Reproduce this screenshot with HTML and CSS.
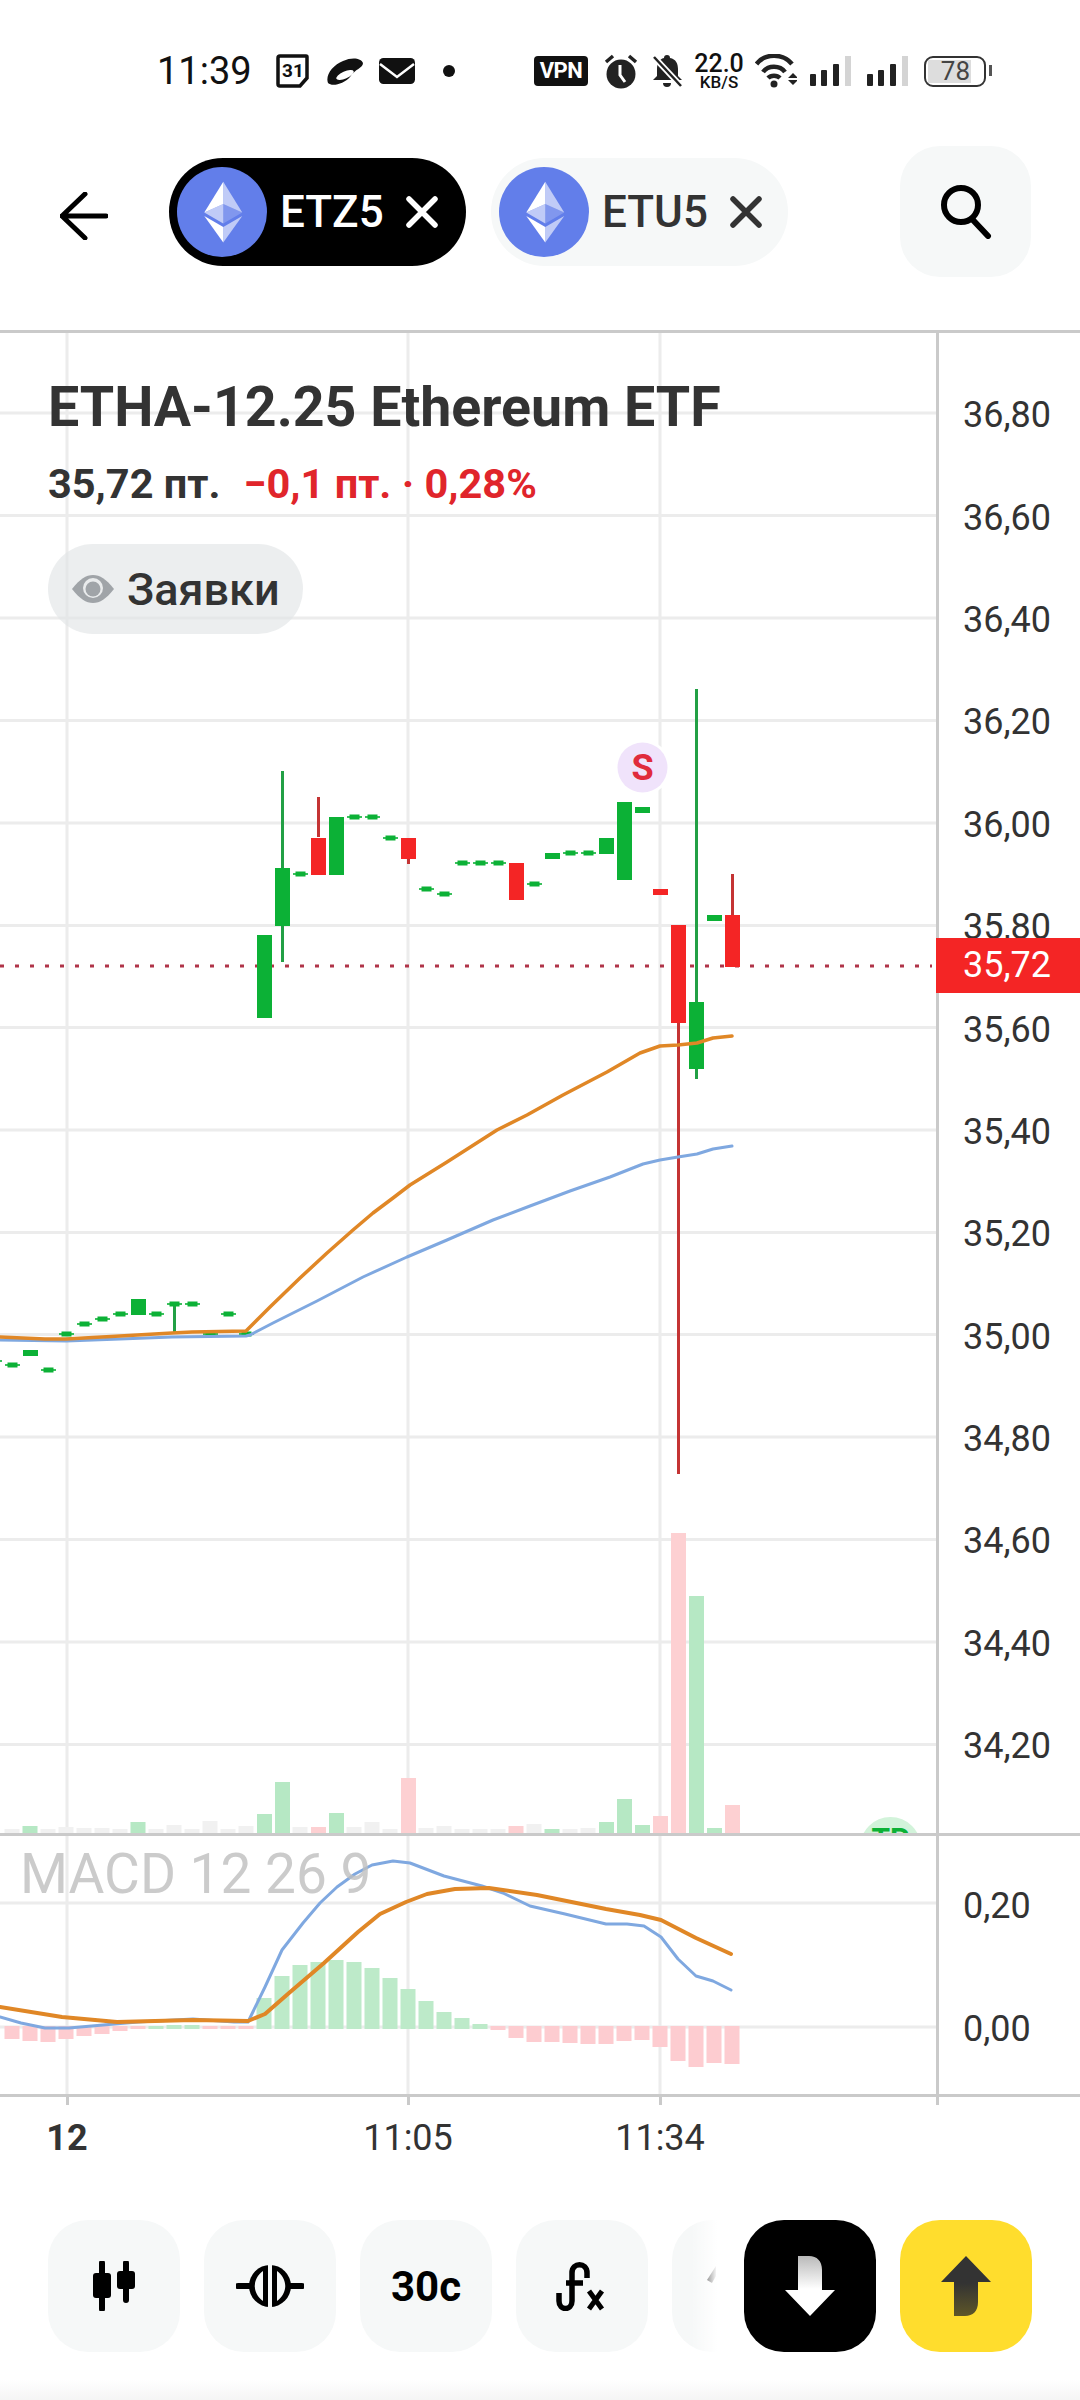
FILE: index.html
```html
<!DOCTYPE html>
<html lang="ru">
<head>
<meta charset="utf-8">
<title>ETHA-12.25 Ethereum ETF</title>
<link rel="stylesheet" href="styles.css">
</head>
<body>
<div class="screen">
  <div class="status">
    <div class="status-left">
      <span class="clock">11:39</span>
      <svg class="si" width="42" height="34" viewBox="0 0 42 34"><path class="outline" d="M13 2h26a1 1 0 0 1 1 1v21l-7 8H13a2 2 0 0 1-2-2V4a2 2 0 0 1 2-2z"/><text class="cal" x="26" y="23">31</text></svg>
      <svg class="si" width="40" height="30" viewBox="0 0 40 30"><path d="M4 27C1 19 9 9 19 5 28 1 37 2 39 7c0 5-8 6-13 14-6 7-18 10-22 6z" fill="#111"/><ellipse cx="21" cy="19" rx="9.500" ry="3.500" transform="rotate(-24 21 19)" fill="#fff"/></svg>
      <svg class="si" width="36" height="28" viewBox="0 0 36 28"><rect y="1" width="36" height="26" rx="4.500" fill="#111"/><path d="M1 7l17 13L35 7" fill="none" stroke="#fff" stroke-width="2.500"/></svg>
      <svg class="si" width="25" height="14" viewBox="0 0 25 14"><circle cx="19" cy="7" r="6" fill="#111"/></svg>
    </div>
    <div class="status-right">
      <span class="vpn">VPN</span>
      <svg class="si" width="40" height="36" viewBox="0 0 40 36"><circle cx="21" cy="21" r="14.500" fill="#222"/><path d="M6 9l7-6M36 9l-7-6" stroke="#222" stroke-width="3.500" fill="none"/><path d="M20 12v10l5 7" stroke="#fff" stroke-width="3" fill="none"/></svg>
      <svg class="si" width="31" height="34" viewBox="0 0 31 34"><path d="M15 1a3 3 0 0 1 3 3c6 1 8 6 8 11v7l4 4H1l4-4v-7c0-5 2-10 7-11a3 3 0 0 1 3-3zM11 29h8a4 4 0 0 1-8 0z" fill="#222"/><path d="M2 3l27 29" stroke="#fff" stroke-width="6"/><path d="M2 3l27 29" stroke="#222" stroke-width="2.500"/></svg>
      <div class="speed"><span class="speed-num">22.0</span><span class="speed-unit">KB/S</span></div>
      <svg class="si" width="42" height="34" viewBox="0 0 42 34"><g fill="none" stroke="#222" stroke-width="4.500"><path d="M1.500 10C10-1 28-1 37 10"/><path d="M8 18C13 11 25 11 30 18"/><path d="M13 24c3-3 9-3 12 0"/></g><circle cx="19" cy="30" r="3.500" fill="#222"/><path d="M33 24h10l-5-5zM33 26h10l-5 5z" fill="#222"/></svg>
      <svg class="si" width="45" height="32" viewBox="0 0 45 32"><rect x="1" y="19" width="6" height="12" rx="1" fill="#222"/><rect x="12" y="15" width="6" height="16" rx="1" fill="#222"/><rect x="24" y="9" width="6" height="22" rx="1" fill="#222"/><rect x="36" y="1" width="6" height="30" fill="#d4d4d4"/></svg>
      <svg class="si" width="46" height="32" viewBox="0 0 46 32"><rect x="1" y="19" width="6" height="12" rx="1" fill="#222"/><rect x="12" y="15" width="6" height="16" rx="1" fill="#222"/><rect x="24" y="9" width="6" height="22" rx="1" fill="#222"/><rect x="36" y="1" width="6" height="30" fill="#d4d4d4"/></svg>
      <div class="battery"><span class="level">78</span></div>
    </div>
  </div>

  <header class="header">
    <svg class="back" width="48" height="48" viewBox="0 0 48 48"><path d="M25 2L2 24l23 22M2 24h44" fill="none" stroke="#000" stroke-width="5" stroke-linecap="round" stroke-linejoin="round"/></svg>
    <div class="pill pill-active">
      <svg class="coin" viewBox="0 0 32 32"><circle cx="16" cy="16" r="16" fill="#627eea"/><g fill="#fff" transform="translate(1.600 1.600) scale(.9)"><path fill-opacity=".6" d="M16.500 4v8.870l7.500 3.350z"/><path d="M16.500 4L9 16.220l7.500-3.350z"/><path fill-opacity=".6" d="M16.500 21.970V28L24 17.620z"/><path d="M16.500 28v-6.030L9 17.620z"/><path fill-opacity=".2" d="M16.500 20.570l7.500-4.350-7.500-3.350z"/><path fill-opacity=".6" d="M9 16.220l7.500 4.350v-7.700z"/></g></svg>
      <span class="ticker">ETZ5</span>
      <svg class="close" width="32" height="32" viewBox="0 0 32 32"><path d="M3 3l26 26M29 3L3 29" stroke="currentColor" stroke-width="5.500" stroke-linecap="round"/></svg>
    </div>
    <div class="pill">
      <svg class="coin" viewBox="0 0 32 32"><circle cx="16" cy="16" r="16" fill="#627eea"/><g fill="#fff" transform="translate(1.600 1.600) scale(.9)"><path fill-opacity=".6" d="M16.500 4v8.870l7.500 3.350z"/><path d="M16.500 4L9 16.220l7.500-3.350z"/><path fill-opacity=".6" d="M16.500 21.970V28L24 17.620z"/><path d="M16.500 28v-6.030L9 17.620z"/><path fill-opacity=".2" d="M16.500 20.570l7.500-4.350-7.500-3.350z"/><path fill-opacity=".6" d="M9 16.220l7.500 4.350v-7.700z"/></g></svg>
      <span class="ticker">ETU5</span>
      <svg class="close" width="32" height="32" viewBox="0 0 32 32"><path d="M3 3l26 26M29 3L3 29" stroke="currentColor" stroke-width="5.500" stroke-linecap="round"/></svg>
    </div>
    <div class="search">
      <svg width="54" height="54" viewBox="0 0 54 54"><circle cx="22" cy="20" r="17" fill="none" stroke="#000" stroke-width="6"/><path d="M33 34l16 17" stroke="#000" stroke-width="6" stroke-linecap="round"/></svg>
    </div>
  </header>

  <section class="pane price">
    <div class="plot">
      <svg class="canvas" width="936" height="1500" viewBox="0 333 936 1500">
        <defs>
          <g id="doji"><rect x="-7.500" y="-.8" width="15" height="1.600"/><rect x="-5" y="-2.500" width="10" height="5"/></g>
        </defs>
        <g class="grid">
          <path d="M0 413H936M0 515.500H936M0 618H936M0 720.500H936M0 823H936M0 925.500H936M0 1027.500H936M0 1130H936M0 1232.500H936M0 1334.500H936M0 1437H936M0 1539.500H936M0 1642H936M0 1744.500H936"/>
          <path d="M67 333V1833M408 333V1833M660 333V1833"/>
        </g>
        <g class="vol-n">
          <rect x="-15" y="1792" width="15" height="41"/>
          <rect x="4.500" y="1829" width="15" height="4"/>
          <rect x="40.500" y="1829" width="15" height="4"/>
          <rect x="58.500" y="1827" width="15" height="6"/>
          <rect x="76.500" y="1828" width="15" height="5"/>
          <rect x="94.500" y="1828" width="15" height="5"/>
          <rect x="112.500" y="1829" width="15" height="4"/>
          <rect x="148.500" y="1829" width="15" height="4"/>
          <rect x="166.500" y="1825" width="15" height="8"/>
          <rect x="184.500" y="1829" width="15" height="4"/>
          <rect x="202.500" y="1821" width="15" height="12"/>
          <rect x="220.500" y="1829" width="15" height="4"/>
          <rect x="238.500" y="1826" width="15" height="7"/>
          <rect x="292.500" y="1827" width="15" height="6"/>
          <rect x="346.500" y="1827" width="15" height="6"/>
          <rect x="364.500" y="1822" width="15" height="11"/>
          <rect x="382.500" y="1829" width="15" height="4"/>
          <rect x="418.500" y="1828" width="15" height="5"/>
          <rect x="436.500" y="1826" width="15" height="7"/>
          <rect x="454.500" y="1829" width="15" height="4"/>
          <rect x="472.500" y="1829" width="15" height="4"/>
          <rect x="490.500" y="1829" width="15" height="4"/>
          <rect x="526.500" y="1824" width="15" height="9"/>
          <rect x="562.500" y="1829" width="15" height="4"/>
          <rect x="580.500" y="1828" width="15" height="5"/>
        </g>
        <g class="vol-g">
          <rect x="22.500" y="1826" width="15" height="7"/>
          <rect x="130.500" y="1822" width="15" height="11"/>
          <rect x="257" y="1814" width="15" height="19"/>
          <rect x="275" y="1782" width="15" height="51"/>
          <rect x="329" y="1813" width="15" height="20"/>
          <rect x="544.500" y="1829" width="15" height="4"/>
          <rect x="599" y="1822" width="15" height="11"/>
          <rect x="617" y="1799" width="15" height="34"/>
          <rect x="635" y="1825" width="15" height="8"/>
          <rect x="689" y="1596" width="15" height="237"/>
          <rect x="707" y="1828" width="15" height="5"/>
        </g>
        <g class="vol-r">
          <rect x="311" y="1827" width="15" height="6"/>
          <rect x="401" y="1778" width="15" height="55"/>
          <rect x="508.500" y="1826" width="15" height="7"/>
          <rect x="653" y="1816" width="15" height="17"/>
          <rect x="671" y="1533" width="15" height="300"/>
          <rect x="725" y="1805" width="15" height="28"/>
        </g>
        <path class="dots" d="M0 966H932"/>
        <g class="wick-g">
          <rect x="173" y="1304" width="3" height="29"/>
          <rect x="281" y="771" width="3" height="191"/>
          <rect x="695" y="689" width="3" height="390"/>
        </g>
        <g class="wick-r">
          <rect x="317" y="797" width="3" height="40"/>
          <rect x="407" y="859" width="3" height="5"/>
          <rect x="677" y="1020" width="3" height="454"/>
          <rect x="731" y="874" width="3" height="42"/>
        </g>
        <g class="up">
          <use href="#doji" x="-5.500" y="1361"/>
          <use href="#doji" x="12.500" y="1365"/>
          <rect x="23" y="1350" width="15" height="6"/>
          <use href="#doji" x="48.500" y="1370"/>
          <use href="#doji" x="66.500" y="1334"/>
          <use href="#doji" x="84.500" y="1324"/>
          <use href="#doji" x="102.500" y="1319"/>
          <use href="#doji" x="120.500" y="1314"/>
          <rect x="131" y="1299" width="15" height="16"/>
          <use href="#doji" x="156.500" y="1314"/>
          <use href="#doji" x="174.500" y="1304"/>
          <use href="#doji" x="192.500" y="1304"/>
          <use href="#doji" x="210.500" y="1334"/>
          <use href="#doji" x="228.500" y="1314"/>
          <use href="#doji" x="246.500" y="1334"/>
          <rect x="257" y="935" width="15" height="83"/>
          <rect x="275" y="868" width="15" height="58"/>
          <use href="#doji" x="300.500" y="874"/>
          <rect x="329" y="817" width="15" height="58"/>
          <use href="#doji" x="354.500" y="817"/>
          <use href="#doji" x="372.500" y="817"/>
          <use href="#doji" x="390.500" y="838"/>
          <use href="#doji" x="426.500" y="889"/>
          <use href="#doji" x="444.500" y="894"/>
          <use href="#doji" x="462.500" y="863"/>
          <use href="#doji" x="480.500" y="863"/>
          <use href="#doji" x="498.500" y="863"/>
          <use href="#doji" x="534.500" y="884"/>
          <rect x="545" y="853" width="15" height="6"/>
          <use href="#doji" x="570.500" y="853"/>
          <use href="#doji" x="588.500" y="853"/>
          <rect x="599" y="838" width="15" height="16"/>
          <rect x="617" y="802" width="15" height="78"/>
          <rect x="635" y="807" width="15" height="6"/>
          <rect x="689" y="1002" width="15" height="67"/>
          <rect x="707" y="915" width="15" height="6"/>
        </g>
        <g class="down">
          <rect x="311" y="838" width="15" height="37"/>
          <rect x="401" y="838" width="15" height="21"/>
          <rect x="509" y="863" width="15" height="37"/>
          <rect x="653" y="889" width="15" height="6"/>
          <rect x="671" y="925" width="15" height="98"/>
          <rect x="725" y="915" width="15" height="52"/>
        </g>
        <polyline class="blue thin" points="0,1340 66,1341 120,1339 172,1337 246,1336 250,1335 273,1323 317,1301 363,1277 407,1257 447,1240 493,1220 530,1206 570,1191 610,1177 643,1164 660,1160 678,1157 697,1154 713,1149 732,1146"/>
        <polyline class="orange thin" points="0,1337 45,1339 66,1339 120,1336 172,1333 192,1332 246,1331 270,1307 300,1278 327,1253 353,1230 373,1213 393,1198 410,1185 447,1162 497,1130 527,1115 563,1095 607,1072 640,1053 660,1046 678,1045 697,1043 713,1038 732,1036"/>
        <circle class="halo" cx="642.500" cy="767.500" r="28"/>
        <circle class="badge" cx="642.500" cy="767.500" r="25"/>
        <text class="badge-s" x="642.500" y="780">S</text>
      </svg>
      <div class="info">
        <h1 class="title">ETHA-12.25 Ethereum ETF</h1>
        <div class="quote"><span>35,72 пт.</span><span class="delta">−0,1 пт. · 0,28%</span></div>
        <div class="chip">
          <svg width="42" height="28" viewBox="0 0 42 28"><path d="M0 14C8 4 14 0 21 0s13 4 21 14c-8 10-14 14-21 14S8 24 0 14z" fill="#a0a4a8"/><circle cx="21" cy="13" r="10" fill="#e9ebec"/><circle cx="21" cy="14" r="7.500" fill="#a0a4a8"/></svg>
          <span>Заявки</span>
        </div>
      </div>
      <div class="tp"><span>TP</span></div>
    </div>
    <div class="axis axis-price">
      <span>36,80</span><span>36,60</span><span>36,40</span><span>36,20</span><span>36,00</span><span>35,80</span><span>35,60</span><span>35,40</span><span>35,20</span><span>35,00</span><span>34,80</span><span>34,60</span><span>34,40</span><span>34,20</span>
    </div>
    <div class="price-tag">35,72</div>
  </section>

  <section class="pane macd">
    <div class="plot">
      <svg class="canvas" width="936" height="258" viewBox="0 1836 936 258">
        <g class="grid">
          <path d="M0 1903H936M0 2027H936"/>
          <path d="M67 1836V2094M408 1836V2094M660 1836V2094"/>
        </g>
        <g class="hist-r">
          <rect x="-15" y="2026" width="15" height="12"/><rect x="4.500" y="2026" width="15" height="13"/><rect x="22.500" y="2026" width="15" height="15"/><rect x="40.500" y="2026" width="15" height="16"/><rect x="58.500" y="2026" width="15" height="13"/><rect x="76.500" y="2026" width="15" height="10"/><rect x="94.500" y="2026" width="15" height="8"/><rect x="112.500" y="2026" width="15" height="5"/><rect x="130.500" y="2026" width="15" height="3"/>
          <rect x="202.500" y="2026" width="15" height="3"/><rect x="220.500" y="2026" width="15" height="3"/><rect x="238.500" y="2026" width="15" height="3"/>
          <rect x="490.500" y="2026" width="15" height="4"/><rect x="508.500" y="2026" width="15" height="12"/><rect x="526.500" y="2026" width="15" height="16"/><rect x="544.500" y="2026" width="15" height="16"/><rect x="562.500" y="2026" width="15" height="17"/><rect x="580.500" y="2026" width="15" height="18"/><rect x="598.500" y="2026" width="15" height="18"/><rect x="616.500" y="2026" width="15" height="15"/><rect x="634.500" y="2026" width="15" height="14"/><rect x="652.500" y="2026" width="15" height="21"/><rect x="670.500" y="2026" width="15" height="35"/><rect x="688.500" y="2026" width="15" height="41"/><rect x="706.500" y="2026" width="15" height="37"/><rect x="724.500" y="2026" width="15" height="38"/>
        </g>
        <g class="hist-g">
          <rect x="148.500" y="2026" width="15" height="3"/><rect x="166.500" y="2025" width="15" height="4"/><rect x="184.500" y="2025" width="15" height="4"/>
          <rect x="256.500" y="1998" width="15" height="31"/><rect x="274.500" y="1976" width="15" height="53"/><rect x="292.500" y="1965" width="15" height="64"/><rect x="310.500" y="1962" width="15" height="67"/><rect x="328.500" y="1960" width="15" height="69"/><rect x="346.500" y="1962" width="15" height="67"/><rect x="364.500" y="1968" width="15" height="61"/><rect x="382.500" y="1978" width="15" height="51"/><rect x="400.500" y="1989" width="15" height="40"/><rect x="418.500" y="2001" width="15" height="28"/><rect x="436.500" y="2012" width="15" height="17"/><rect x="454.500" y="2018" width="15" height="11"/><rect x="472.500" y="2024" width="15" height="5"/>
        </g>
        <polyline class="blue" points="0,2017 21,2023 45,2028 69,2028 103,2025 138,2022 193,2019 234,2022 248,2022 265,1987 282,1950 303,1923 320,1903 337,1887 355,1874 372,1865 393,1861 410,1863 444,1876 482,1886 503,1893 530,1906 565,1914 606,1924 627,1924 644,1926 661,1937 678,1959 696,1976 713,1981 731,1990"/>
        <polyline class="orange" points="0,2007 62,2017 117,2022 193,2020 248,2021 265,2014 289,1993 324,1963 358,1932 380,1914 406,1902 427,1894 455,1889 489,1888 537,1895 606,1909 640,1915 661,1920 696,1938 731,1954"/>
      </svg>
      <div class="macd-label">MACD 12 26 9</div>
    </div>
    <div class="axis axis-macd">
      <span>0,20</span><span>0,00</span>
    </div>
  </section>

  <div class="times">
    <div class="tick tick-12"><b>12</b></div>
    <div class="tick tick-1105"><span>11:05</span></div>
    <div class="tick tick-1134"><span>11:34</span></div>
    <div class="tick tick-end"></div>
  </div>

  <div class="toolbar">
    <div class="tools">
      <div class="tool">
        <svg width="44" height="50" viewBox="0 0 44 50"><path d="M10 2v46M34 2v37" stroke="#000" stroke-width="6" stroke-linecap="round"/><rect x="1" y="12" width="18" height="25" rx="3"/><rect x="25" y="10" width="18" height="18" rx="3"/></svg>
      </div>
      <div class="tool">
        <svg width="68" height="44" viewBox="0 0 68 44"><path d="M2 22h16M50 22h16" stroke="#000" stroke-width="6" stroke-linecap="round"/><circle cx="34" cy="22" r="21"/><path d="M27 7C16 15 16 29 27 37zM41 7c11 8 11 22 0 30z" fill="#f6f8f8"/><rect x="32" width="4" height="44" fill="#f6f8f8"/></svg>
      </div>
      <div class="tool tool-text">30с</div>
      <div class="tool">
        <svg width="52" height="50" viewBox="0 0 52 50"><path d="M3 32v8c0 10 13 10 13 0V12C16 1 31 1 31 12v5M10 22h17" fill="none" stroke="#000" stroke-width="5.500"/><path d="M33 30l13 18M46 30L33 48" stroke="#000" stroke-width="5"/></svg>
      </div>
      <div class="tool tool-cut">
        <svg width="132" height="132" viewBox="0 0 132 132"><path d="M44 46l-9 14 5 3 4-7z"/></svg>
      </div>
    </div>
    <div class="trade trade-down">
      <svg width="52" height="60" viewBox="0 0 52 60"><defs><linearGradient id="dg" x1="0" y1="0" x2="0" y2="1"><stop offset="0" stop-color="#b9b9b9"/><stop offset=".55" stop-color="#fff"/></linearGradient></defs><path d="M14 0h11c8 0 13 5 13 14v20h13L26 60 1 34h13z" fill="url(#dg)"/></svg>
    </div>
    <div class="trade trade-up">
      <svg width="52" height="60" viewBox="0 0 52 60"><defs><linearGradient id="ug" x1="0" y1="0" x2="0" y2="1"><stop offset=".45" stop-color="#333"/><stop offset="1" stop-color="#5e5628"/></linearGradient></defs><path d="M26 0l25 26H38v20c0 9-5 14-13 14H14V26H1z" fill="url(#ug)"/></svg>
    </div>
  </div>
  <div class="shade"></div>
</div>
</body>
</html>
```

FILE: styles.css
```css
* { box-sizing: border-box; margin: 0; padding: 0; }
html, body { width: 1080px; height: 2400px; background: #fff; overflow: hidden; }
body { font-family: Roboto, "Noto Sans", sans-serif; color: #333; }
.screen { width: 1080px; height: 2400px; display: flex; flex-direction: column; }

/* status bar */
.status { height: 142px; display: flex; align-items: center; justify-content: space-between; padding: 0 89px 0 157px; color: #111; }
.status-left, .status-right { display: flex; align-items: center; }
.status-left { gap: 15px; }
.status-right { gap: 12px; }
.si { display: block; flex: none; }
.clock { font-size: 38px; line-height: 1; }
.outline { fill: none; stroke: #111; stroke-width: 3.5; }
.cal { font: 700 19px "Roboto", sans-serif; text-anchor: middle; fill: #111; }
.vpn { width: 54px; height: 30px; background: #111; color: #fff; border-radius: 4px; font-size: 22px; font-weight: 700; line-height: 30px; text-align: center; letter-spacing: -.5px; }
.speed { width: 48px; display: flex; flex-direction: column; align-items: center; color: #111; }
.speed-num { font-size: 25px; font-weight: 500; line-height: 22px; }
.speed-unit { font-size: 17px; font-weight: 500; line-height: 14px; }
.battery { position: relative; width: 62px; height: 31px; border: 2.5px solid #333; border-radius: 9px; padding: 2px; margin-right: 5px; }
.battery::after { content: ""; position: absolute; right: -8px; top: 7px; width: 3px; height: 11px; background: #555; }
.level { display: block; width: 43px; height: 100%; background: #ddd; font-size: 26px; line-height: 22px; text-align: right; padding-right: 1px; color: #444; }

/* header */
.header { height: 188px; padding-top: 4px; display: flex; align-items: flex-start; }
.back { margin: 46px 0 0 60px; flex: none; }
.pill { margin-top: 12px; height: 108px; border-radius: 54px; display: flex; align-items: center; width: 297px; padding-left: 8px; background: #f6f8f8; color: #333; flex: none; }
.pill-active { background: #000; color: #fff; margin-left: 61px; margin-right: 25px; }
.coin { width: 90px; height: 90px; flex: none; }
.ticker { font-size: 44px; font-weight: 500; margin-left: 13px; }
.close { margin-left: 22px; flex: none; }
.search { width: 131px; height: 131px; border-radius: 40px; background: #f6f8f8; margin-left: 112px; display: flex; align-items: center; justify-content: center; flex: none; }

/* panes */
.pane { position: relative; display: flex; border-bottom: 3px solid #cacaca; }
.price { height: 1506px; border-top: 3px solid #cacaca; }
.macd { height: 261px; }
.plot { position: relative; width: 939px; flex: none; border-right: 3px solid #cacaca; overflow: hidden; }
.canvas { display: block; }
.grid path { fill: none; stroke: #ececec; stroke-width: 3; }
.vol-n { fill: #f1f1f1; }
.vol-g { fill: #b6e8c4; }
.vol-r { fill: #fdd0d2; }
.hist-g { fill: #bdeac9; }
.hist-r { fill: #fdccd0; }
.dots { stroke: #b03448; stroke-width: 3; stroke-dasharray: 4 11; fill: none; }
.wick-g { fill: #22a045; }
.wick-r { fill: #c43434; }
.up { fill: #0cb136; }
.down { fill: #f42525; }
.blue, .orange { fill: none; stroke-linejoin: round; stroke-linecap: round; }
.blue { stroke: #7fa8e0; stroke-width: 3; }
.orange { stroke: #e08726; stroke-width: 4; }
.orange.thin { stroke-width: 3.5; }
.halo { fill: #fff; }
.badge { fill: #f0e3fb; }
.badge-s { font: 700 36px Roboto, sans-serif; fill: #e02b3c; text-anchor: middle; }

/* overlay info */
.info { position: absolute; left: 48px; top: 43px; display: flex; flex-direction: column; align-items: flex-start; }
.title { font-size: 55.5px; font-weight: 700; line-height: 64px; color: #333; white-space: nowrap; }
.quote { display: flex; gap: 23px; font-size: 41.5px; font-weight: 700; line-height: 50px; margin-top: 19px; color: #333; }
.delta { color: #e0252b; }
.chip { margin-top: 35px; height: 90px; width: 255px; border-radius: 45px; background: rgba(226, 229, 231, .65); display: flex; align-items: center; padding-left: 24px; gap: 13px; font-size: 45px; font-weight: 500; color: #333; }
.tp { position: absolute; left: 860px; top: 1484px; width: 61px; height: 61px; border-radius: 50%; background: #d2f3da; text-align: center; color: #0cb136; font-size: 30px; font-weight: 700; line-height: 44px; }

/* axis */
.axis { flex: 1; display: flex; flex-direction: column; font-size: 36px; color: #333; padding-left: 24px; }
.axis span { display: flex; align-items: center; line-height: 1; flex: none; }
.axis-price { padding-top: 31px; }
.axis-price span { height: 102.400px; }
.axis-macd { padding-top: 8px; }
.axis-macd span { height: 123px; }
.price-tag { position: absolute; right: 0; top: 605px; width: 144px; height: 55px; background: #f42525; color: #fff; font-size: 36px; line-height: 55px; padding-left: 27px; }
.macd-label { position: absolute; left: 20px; top: 6px; font-size: 55px; line-height: 64px; color: rgba(190, 190, 190, .8); white-space: nowrap; }

/* time axis */
.times { height: 123px; display: flex; font-size: 36px; color: #333; padding-left: 67px; }
.tick { width: 0; position: relative; display: flex; justify-content: center; padding-top: 16px; line-height: 50px; white-space: nowrap; }
.tick::before { content: ""; position: absolute; top: 0; left: -1.500px; width: 3px; height: 8px; background: #cacaca; }
.tick b { font-weight: 700; color: #333; }
.tick-1105 { margin-left: 341px; }
.tick-1134 { margin-left: 252px; }
.tick-end { margin-left: 277.500px; }

/* toolbar */
.toolbar { height: 132px; display: flex; gap: 24px; flex: none; }
.tools { position: relative; width: 720px; padding-left: 48px; display: flex; gap: 24px; overflow: hidden; flex: none; }
.tools::after { content: ""; position: absolute; left: 672px; top: 0; width: 48px; height: 100%; background: linear-gradient(90deg, rgba(255, 255, 255, 0) 40%, #fff 94%); }
.tool { width: 132px; height: 132px; border-radius: 40px; background: #f6f8f8; display: flex; align-items: center; justify-content: center; flex: none; }
.tool-text { font-size: 42px; font-weight: 700; color: #000; }
.tool-cut svg { display: block; }
.trade { width: 132px; height: 132px; border-radius: 40px; display: flex; align-items: center; justify-content: center; flex: none; }
.trade-down { background: #000; }
.trade-up { background: #ffdd2d; }
.shade { margin-top: 28px; height: 20px; background: linear-gradient(180deg, #fff, #f5f5f5); flex: none; }
```
